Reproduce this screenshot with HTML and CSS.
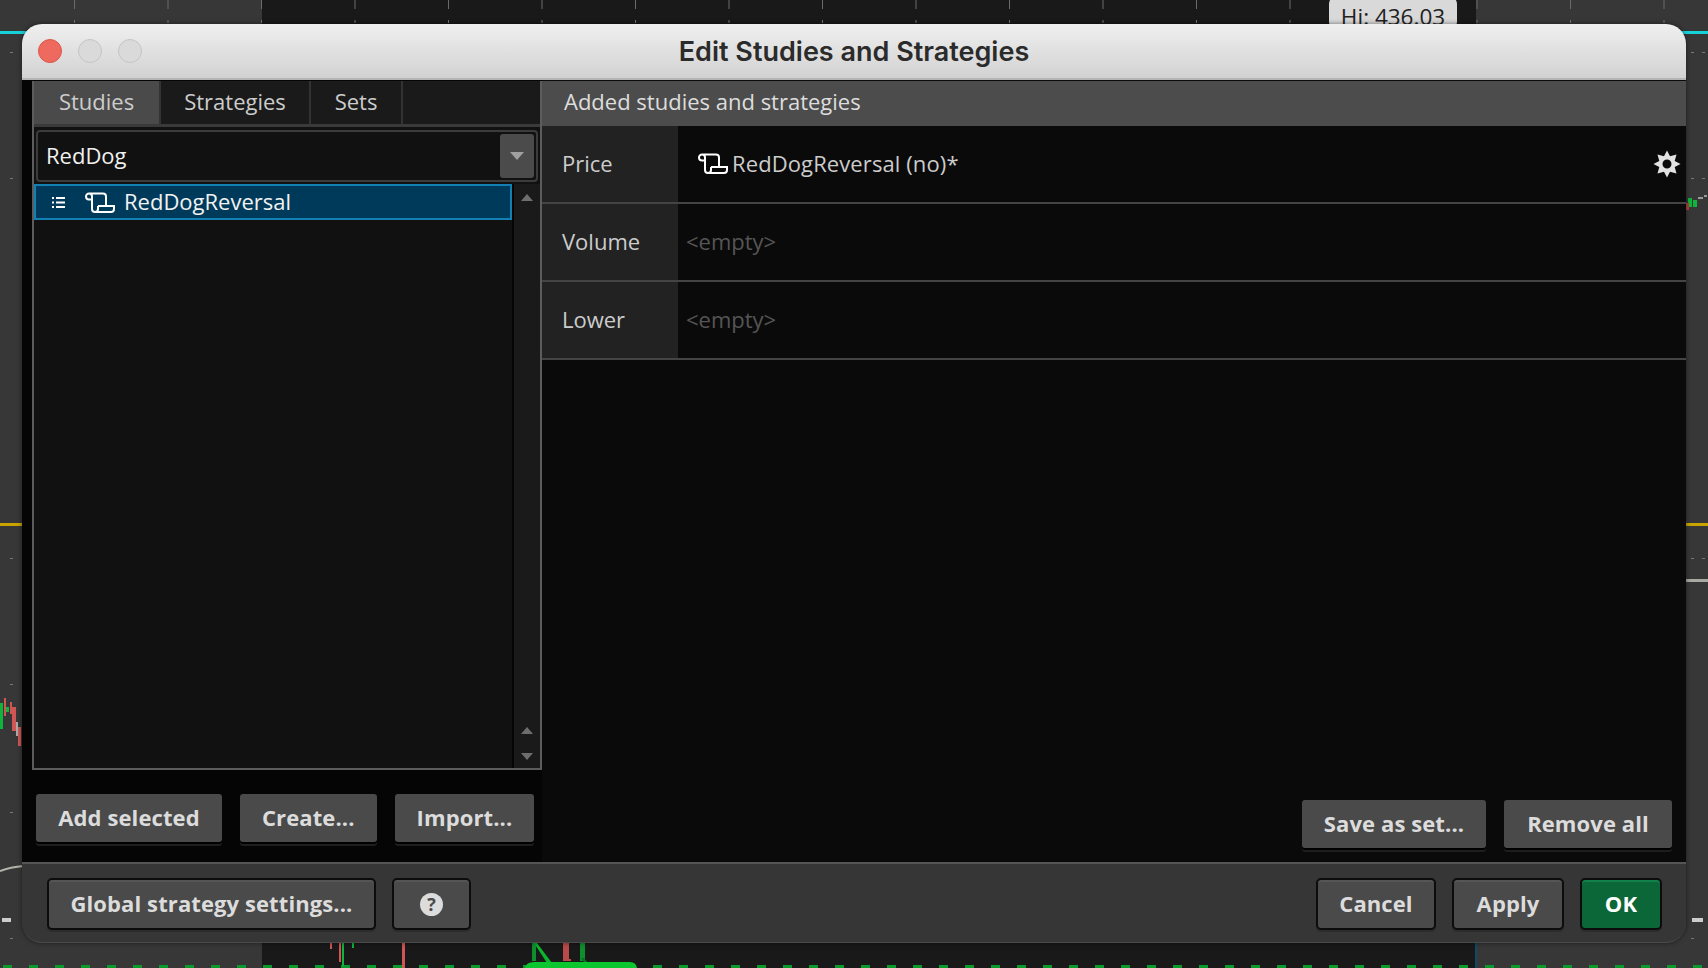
FILE: index.html
```html
<!DOCTYPE html>
<html>
<head>
  <title>Edit Studies and Strategies</title>
  <link rel="stylesheet" href="styles.css">
</head>
<body>
  <!-- chart behind the dialog -->
  <svg class="chart" width="1708" height="968" viewBox="0 0 1708 968">
    <defs>
      <pattern id="ticks" x="74" y="0" width="93.5" height="24" patternUnits="userSpaceOnUse">
        <rect width="1" height="9" fill="#6a6a6a"/>
        <rect y="20" width="1" height="3" fill="#777"/>
      </pattern>
      <pattern id="volume" x="3" y="965" width="26" height="3" patternUnits="userSpaceOnUse">
        <rect width="9" height="3" fill="#0a9a2c"/>
      </pattern>
    </defs>
    <rect width="1708" height="968" fill="#373737"/>
    <rect x="262" width="1214" height="968" fill="#191919"/>
    <rect width="1708" height="24" fill="url(#ticks)"/>
    <rect y="965" width="1708" height="3" fill="url(#volume)"/>
    <rect y="31" width="30" height="3" fill="#18d0d8"/>
    <rect x="1680" y="31" width="28" height="3" fill="#18d0d8"/>
    <rect y="523" width="24" height="3" fill="#c9a400"/>
    <rect x="1684" y="523" width="24" height="3" fill="#c9a400"/>
    <rect x="1684" y="579" width="24" height="3" fill="#a9a9a4"/>
    <path d="M0 871Q10 867 24 866" fill="none" stroke="#b5b5ae" stroke-width="2"/>
    <rect x="10" y="52" width="3" height="1" fill="#777"/>
    <rect x="10" y="178" width="3" height="1" fill="#777"/>
    <rect x="10" y="558" width="3" height="1" fill="#777"/>
    <rect x="10" y="684" width="3" height="1" fill="#777"/>
    <rect x="10" y="812" width="3" height="1" fill="#777"/>
    <rect x="10" y="938" width="3" height="1" fill="#777"/>
    <rect x="1691" y="52" width="3" height="1" fill="#777"/>
    <rect x="1702" y="52" width="3" height="1" fill="#777"/>
    <rect x="1691" y="178" width="3" height="1" fill="#777"/>
    <rect x="1702" y="178" width="3" height="1" fill="#777"/>
    <rect x="1691" y="558" width="3" height="1" fill="#777"/>
    <rect x="1702" y="558" width="3" height="1" fill="#777"/>
    <rect x="1691" y="938" width="3" height="1" fill="#777"/>
    <rect x="2" y="918" width="9" height="4" fill="#ccc"/>
    <rect x="1692" y="918" width="11" height="4" fill="#ccc"/>
    <!-- candles, left edge -->
    <rect x="0" y="703" width="3" height="26" fill="#0fb53a"/>
    <rect x="4" y="698" width="2" height="18" fill="#d05555"/>
    <rect x="6" y="707" width="3" height="5" fill="#0fb53a"/>
    <rect x="10" y="702" width="2" height="12" fill="#d05555"/>
    <rect x="12" y="707" width="4" height="24" fill="#d05555"/>
    <rect x="16" y="722" width="2" height="14" fill="#aaa"/>
    <rect x="18" y="727" width="3" height="19" fill="#d05555"/>
    <!-- candles, right edge -->
    <rect x="1688" y="198" width="4" height="9" fill="#0fb53a"/>
    <rect x="1693" y="200" width="4" height="7" fill="#0fb53a"/>
    <rect x="1686" y="203" width="3" height="7" fill="#b04040"/>
    <rect x="1698" y="197" width="5" height="2" fill="#999"/>
    <rect x="1704" y="195" width="3" height="2" fill="#999"/>
    <!-- candles, bottom edge -->
    <rect x="330" y="943" width="2" height="6" fill="#d05555"/>
    <rect x="339" y="943" width="2" height="19" fill="#d05555"/>
    <rect x="342" y="943" width="2" height="23" fill="#0fb53a"/>
    <rect x="352" y="943" width="2" height="5" fill="#0fb53a"/>
    <rect x="402" y="943" width="3" height="25" fill="#d05555"/>
    <rect x="532" y="943" width="4" height="18" fill="#0e8f2e"/>
    <path d="M534 943L537 943L552 963L547 963Z" fill="#0bb52d"/>
    <path d="M563 943H569V959H571V961H563Z" fill="#b84a4a"/>
    <rect x="580" y="943" width="5" height="18" fill="#0e8f2e"/>
    <path d="M581 958L584 958L592 968L588 968Z" fill="#0a6e24"/>
    <path d="M525 968Q526 962 534 962H630Q636 962 637 968Z" fill="#0bc62f"/>
    <rect x="1475" y="943" width="2" height="25" fill="#0f4a66"/>
  </svg>
  <div class="hi-label">Hi: 436.03</div>

  <svg class="icon-defs" width="0" height="0">
    <symbol id="scroll" viewBox="0 0 32 21">
      <path d="M6 1.500H20a3 3 0 0 1 3 3V14M15 14H31V17a3 3 0 0 1-3 3H12M6 1.500a3 3 0 0 0-3 3c0 2 1 3 3 3H9M6 1.500c2 0 3 1.500 3 3V17a3 3 0 0 0 6 0V14" fill="none" stroke="#fff" stroke-width="2"/>
    </symbol>
  </svg>

  <div class="window">
    <div class="titlebar">
      <div class="lights">
        <span class="light red"></span>
        <span class="light"></span>
        <span class="light"></span>
      </div>
      <div class="title">Edit Studies and Strategies</div>
    </div>

    <div class="content">
      <div class="left">
        <div class="panel">
          <div class="tabs">
            <div class="tab tab-studies active">Studies</div>
            <div class="tab tab-strategies">Strategies</div>
            <div class="tab tab-sets">Sets</div>
            <div class="tab tab-rest"></div>
          </div>
          <div class="combo-wrap">
            <div class="combo">
              <span class="combo-text">RedDog</span>
              <span class="combo-btn"><span class="arrow-down light-arrow"></span></span>
            </div>
          </div>
          <div class="list-area">
            <div class="list">
              <div class="list-row">
                <svg class="list-icon" width="13" height="11" viewBox="0 0 13 11">
                  <path d="M0 0h2v2H0zM0 4.500h2v2H0zM0 9h2v2H0zM4 0h9v2H4zM4 4.500h9v2H4zM4 9h9v2H4z" fill="#fff"/>
                </svg>
                <svg class="scroll-icon" width="32" height="21"><use href="#scroll"/></svg>
                <span class="list-text">RedDogReversal</span>
              </div>
            </div>
            <div class="scrollbar">
              <span class="arrow-up"></span>
              <span class="scroll-space"></span>
              <span class="arrow-up"></span>
              <span class="arrow-down"></span>
            </div>
          </div>
        </div>
        <div class="left-buttons">
          <button class="btn btn-add">Add selected</button>
          <button class="btn">Create...</button>
          <button class="btn">Import...</button>
        </div>
      </div>

      <div class="right">
        <div class="right-header">Added studies and strategies</div>
        <div class="row">
          <div class="row-label">Price</div>
          <div class="row-value">
            <svg class="scroll-icon" width="32" height="21"><use href="#scroll"/></svg>
            <span>RedDogReversal (no)*</span>
          </div>
          <svg class="gear" width="28" height="28" viewBox="-14 -14 28 28">
            <path fill-rule="evenodd" fill="#e2e2e2" d="M0-13.500L3-7.700L9.500-9.500L7.700-3L13.500 0L7.700 3L9.500 9.500L3 7.700L0 13.500L-3 7.700L-9.500 9.500L-7.700 3L-13.500 0L-7.700-3L-9.500-9.500L-3-7.700ZM4.500 0A4.500 4.500 0 1 0-4.500 0A4.500 4.500 0 1 0 4.500 0Z"/>
          </svg>
        </div>
        <div class="row">
          <div class="row-label">Volume</div>
          <div class="row-empty">&lt;empty&gt;</div>
        </div>
        <div class="row">
          <div class="row-label">Lower</div>
          <div class="row-empty">&lt;empty&gt;</div>
        </div>
        <div class="right-buttons">
          <button class="btn btn-save">Save as set...</button>
          <button class="btn btn-remove">Remove all</button>
        </div>
      </div>
    </div>

    <div class="footer">
      <button class="btn btn-framed btn-global">Global strategy settings...</button>
      <button class="btn btn-framed btn-help"><span class="help-icon">?</span></button>
      <div class="footer-space"></div>
      <button class="btn btn-framed btn-cancel">Cancel</button>
      <button class="btn btn-framed btn-apply">Apply</button>
      <button class="btn btn-framed btn-ok">OK</button>
    </div>
  </div>
</body>
</html>
```

FILE: styles.css
```css
body {
  margin: 0;
  width: 1708px;
  height: 968px;
  padding: 24px 22px 25px;
  box-sizing: border-box;
  overflow: hidden;
  position: relative;
  background-color: #191919;
  font-family: "Open Sans", sans-serif;
}

.chart {
  position: absolute;
  left: 0;
  top: 0;
}

.icon-defs {
  position: absolute;
}

.hi-label {
  position: absolute;
  left: 1329px;
  top: -4px;
  width: 128px;
  height: 34px;
  box-sizing: border-box;
  padding-top: 5px;
  border-radius: 8px;
  background-color: #d9d9d9;
  color: #222;
  font-size: 22.5px;
  text-align: center;
}

.window {
  position: relative;
  height: 919px;
  display: flex;
  flex-direction: column;
  border-radius: 20px;
  overflow: hidden;
  box-shadow: 0 0 5px rgba(0, 0, 0, 0.5);
}

/* Title bar */
.titlebar {
  height: 54px;
  flex: none;
  display: flex;
  align-items: center;
  position: relative;
  background: linear-gradient(#efefef, #d2d2d2);
  border-bottom: 2px solid #b4b4b4;
}

.lights {
  display: flex;
  gap: 16px;
  padding-left: 16px;
}

.light {
  width: 22px;
  height: 22px;
  border: 1px solid #c4c4c4;
  border-radius: 50%;
  background-color: #dadada;
}

.light.red {
  background-color: #ee6a5f;
  border-color: #d9574c;
}

.title {
  position: absolute;
  left: 0;
  right: 0;
  text-align: center;
  color: #2b2b2b;
  font-family: Inter, sans-serif;
  font-size: 27px;
  font-weight: 600;
}

/* Main area */
.content {
  flex: 1;
  display: flex;
  min-height: 0;
  background-color: #050505;
}

.left {
  width: 520px;
  flex: none;
  box-sizing: border-box;
  padding: 1px 0 0 10px;
}

.panel {
  height: 689px;
  box-sizing: border-box;
  display: flex;
  flex-direction: column;
  border: 2px solid #5c5c5c;
  border-top: none;
  background-color: #111;
}

.tabs {
  display: flex;
  gap: 2px;
  height: 43px;
  flex: none;
  background-color: #333;
}

.tab {
  line-height: 41px;
  font-size: 22px;
  text-align: center;
  color: #ccc;
  background-color: #1a1a1a;
}

.tab.active {
  background-color: #4a4a4a;
}

.tab-studies {
  width: 125px;
}

.tab-strategies {
  width: 148px;
}

.tab-sets {
  width: 90px;
}

.tab-rest {
  flex: 1;
}

.combo-wrap {
  flex: none;
  padding: 3px 2px 2px;
  border-top: 3px solid #3a3a3a;
}

.combo {
  height: 52px;
  box-sizing: border-box;
  display: flex;
  align-items: center;
  justify-content: space-between;
  padding: 0 2px 0 8px;
  border: 2px solid #3c3c3c;
  border-radius: 4px;
  background-color: #111;
}

.combo-text {
  margin-bottom: 2px;
  font-size: 22px;
  color: #f0f0f0;
}

.combo-btn {
  width: 34px;
  height: 44px;
  display: flex;
  align-items: center;
  justify-content: center;
  border-radius: 3px;
  background-color: #4b4b4b;
}

.list-area {
  flex: 1;
  display: flex;
  min-height: 0;
}

.list {
  flex: 1;
  border-right: 2px solid #050505;
}

.list-row {
  height: 36px;
  box-sizing: border-box;
  display: flex;
  align-items: center;
  border: 2px solid #1380b5;
  background-color: #003a5a;
  color: #f2f2f2;
  font-size: 22px;
}

.list-text {
  margin-bottom: 2px;
}

.list-icon {
  margin-left: 16px;
}

.list-row .scroll-icon {
  margin-left: 18px;
  margin-right: 9px;
}

.scrollbar {
  width: 26px;
  flex: none;
  display: flex;
  flex-direction: column;
  align-items: center;
  gap: 19px;
  padding: 10px 0 8px;
  box-sizing: border-box;
  background-color: #1a1a1a;
}

.scroll-space {
  flex: 1;
}

.arrow-up {
  width: 0;
  height: 0;
  border-left: 6px solid transparent;
  border-right: 6px solid transparent;
  border-bottom: 7px solid #6e6e6e;
}

.arrow-down {
  width: 0;
  height: 0;
  border-left: 6px solid transparent;
  border-right: 6px solid transparent;
  border-top: 7px solid #6e6e6e;
}

.arrow-down.light-arrow {
  border-left-width: 7px;
  border-right-width: 7px;
  border-top: 8px solid #a0a0a0;
}

/* Buttons */
.btn {
  height: 48px;
  padding: 0 22px 2px;
  border: none;
  border-radius: 3px;
  background-color: #4a4a4a;
  color: #dcdcdc;
  font-family: "Open Sans", sans-serif;
  font-size: 22px;
  font-weight: 700;
  letter-spacing: 0.1px;
  box-shadow: 0 2px 0 #000, 0 4px 0 #1e1e1e;
}

.btn-add {
  width: 186px;
  padding: 0 0 2px;
}

.btn-save {
  width: 184px;
  padding: 0 0 2px;
}

.btn-remove {
  width: 168px;
  padding: 0 0 2px;
}

.left-buttons {
  display: flex;
  gap: 18px;
  padding: 24px 0 0 4px;
}

.right {
  flex: 1;
  display: flex;
  flex-direction: column;
  min-width: 0;
  padding-top: 1px;
  background-color: #0a0a0a;
}

.right-header {
  height: 45px;
  flex: none;
  padding-left: 22px;
  line-height: 41px;
  font-size: 22px;
  color: #ddd;
  background-color: #4c4c4c;
}

.row {
  height: 78px;
  flex: none;
  box-sizing: border-box;
  display: flex;
  align-items: center;
  border-bottom: 2px solid #444;
  font-size: 22px;
}

.row-label {
  width: 136px;
  height: 100%;
  flex: none;
  box-sizing: border-box;
  padding: 0 0 2px 20px;
  display: flex;
  align-items: center;
  color: #ccc;
  background-color: #222;
}

.row-value {
  flex: 1;
  display: flex;
  align-items: center;
  gap: 4px;
  padding: 0 0 2px 18px;
  color: #ccc;
  letter-spacing: 0.1px;
}

.row-empty {
  padding: 0 0 2px 8px;
  color: #555;
}

.gear {
  margin-right: 5px;
}

.right-buttons {
  margin-top: auto;
  display: flex;
  justify-content: flex-end;
  gap: 18px;
  padding: 0 14px 14px 0;
}

/* Footer */
.footer {
  height: 81px;
  flex: none;
  box-sizing: border-box;
  display: flex;
  gap: 16px;
  padding: 14px 24px 0 25px;
  border-top: 2px solid #555;
  border-bottom: 1px solid #4a4a4a;
  border-radius: 0 0 20px 20px;
  background-color: #363636;
}

.footer-space {
  flex: 1;
}

.btn-framed {
  height: 52px;
  padding: 0 0 2px;
  border: 2px solid #0c0c0c;
  border-radius: 5px;
  box-shadow: inset 0 2px 0 #555, 0 2px 0 #2c2c2c;
}

.btn-global {
  width: 329px;
}

.btn-cancel {
  width: 120px;
}

.btn-apply {
  width: 112px;
}

.btn-help {
  width: 79px;
  padding: 0;
  display: flex;
  align-items: center;
  justify-content: center;
}

.help-icon {
  width: 23px;
  height: 23px;
  border-radius: 50%;
  background-color: #dcdcdc;
  color: #4a4a4a;
  font-size: 18px;
  font-weight: 700;
  line-height: 23px;
}

.btn-ok {
  width: 82px;
  background-color: #0b6638;
  color: #fff;
  box-shadow: inset 0 2px 0 #11804a, 0 2px 0 #2c2c2c;
}
```
